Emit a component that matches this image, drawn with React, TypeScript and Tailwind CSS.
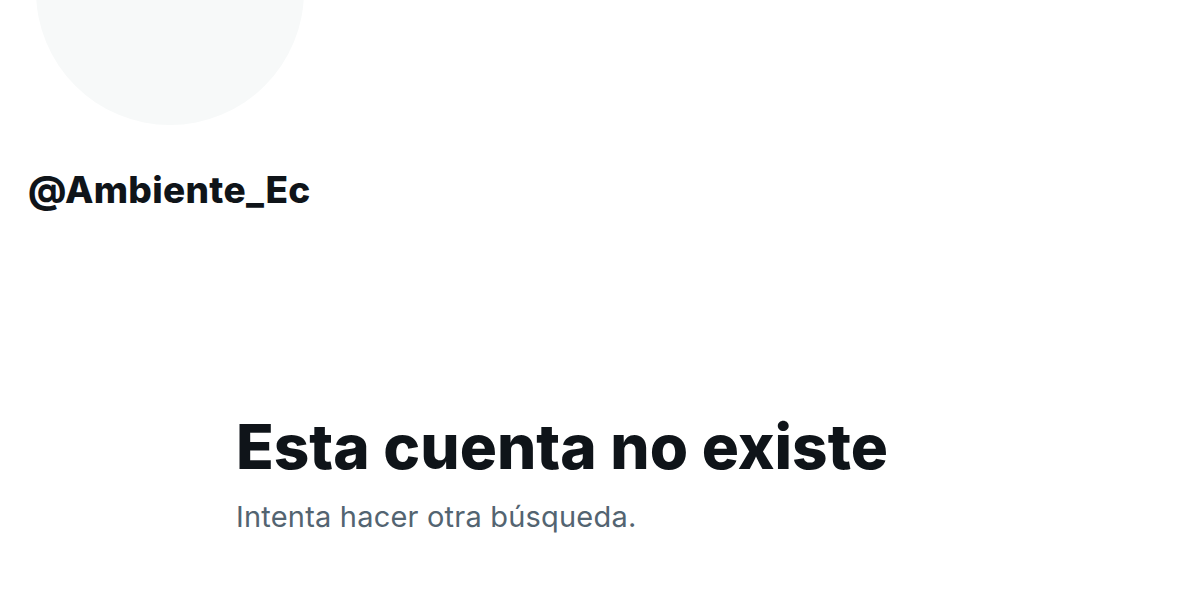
import React from 'react';

const font = { fontFamily: 'Inter, "Noto Sans", sans-serif' };

const App = () => {
  return (
    <div className="relative h-[600px] w-[1200px] overflow-hidden bg-white" style={font}>
      {/* avatar placeholder */}
      <div className="absolute left-[36px] top-[-143px] h-[268px] w-[268px] rounded-full bg-[#f7f9f9]" />

      <div className="flex flex-col">
        <div className="h-[168px]" />
        <h2 className="pl-[28px] text-[37px] font-extrabold leading-[44px] tracking-[0.3px] text-[#0f1419]">
          @Ambiente_Ec
        </h2>

        <div className="mt-[199px] pl-[236px]">
          <h1 className="text-[62px] font-extrabold leading-[72px] text-[#0f1419]">
            Esta cuenta no existe
          </h1>
          <p className="mt-[16px] text-[29px] leading-[36px] tracking-[0.2px] text-[#536471]">
            Intenta hacer otra búsqueda.
          </p>
        </div>
      </div>
    </div>
  );
};

export default App;
